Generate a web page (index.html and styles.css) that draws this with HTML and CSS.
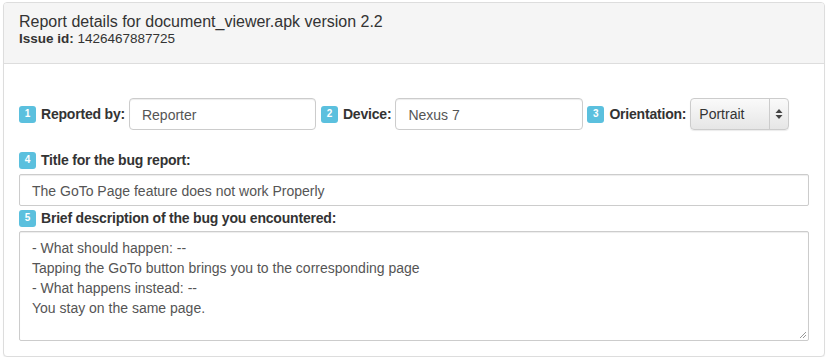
FILE: index.html
```html
<!DOCTYPE html>
<html lang="en">
<head>
    <meta charset="UTF-8" />
    <meta name="viewport" content="width=device-width, initial-scale=1.0" />
    <title>Report details</title>
    <link rel="stylesheet" href="styles.css">
</head>
<body>
    <div class="panel">
        <div class="panel-heading">
            <h3 class="panel-title">Report details for document_viewer.apk version 2.2</h3>
            <div class="issue"><b>Issue id:</b> 1426467887725</div>
        </div>

        <div class="panel-body">
            <div class="inline-row">
                <span class="badge">1</span>
                <label class="label">Reported by:</label>
                <div class="field field-reporter">Reporter</div>

                <span class="badge">2</span>
                <label class="label">Device:</label>
                <div class="field field-device">Nexus 7</div>

                <span class="badge">3</span>
                <label class="label">Orientation:</label>
                <div class="select">
                    <span class="select-value">Portrait</span>
                    <span class="select-arrows">
                        <svg width="8" height="12" viewBox="0 0 8 12">
                            <path d="M4 1 L7.5 5 L0.5 5 Z" fill="#444"/>
                            <path d="M4 11 L7.5 7 L0.5 7 Z" fill="#444"/>
                        </svg>
                    </span>
                </div>
            </div>

            <div class="label-row first">
                <span class="badge">4</span>
                <label class="label">Title for the bug report:</label>
            </div>
            <div class="field field-wide">The GoTo Page feature does not work Properly</div>

            <div class="label-row">
                <span class="badge">5</span>
                <label class="label">Brief description of the bug you encountered:</label>
            </div>
            <div class="textarea">
                - What should happen: --<br>
                Tapping the GoTo button brings you to the corresponding page<br>
                - What happens instead: --<br>
                You stay on the same page.
                <svg class="grip" width="8" height="8" viewBox="0 0 8 8">
                    <path d="M7 1 L1 7 M7 4 L4 7" stroke="#999" stroke-width="1"/>
                </svg>
            </div>
        </div>
    </div>
</body>
</html>
```

FILE: styles.css
```css
* {
    margin: 0;
    padding: 0;
    box-sizing: border-box;
}

body {
    font-family: "Liberation Sans", Arial, sans-serif;
    font-size: 14px;
    line-height: 20px;
    color: #333;
    background-color: #fff;
    padding: 2px 5px 0 3px;
}

.panel {
    width: 822px;
    border: 1px solid #ddd;
    border-radius: 4px;
    box-shadow: 0 1px 1px rgba(0,0,0,0.05);
    background-color: #fff;
}

.panel-heading {
    background-color: #f5f5f5;
    border-bottom: 1px solid #ddd;
    border-radius: 3px 3px 0 0;
    padding: 9px 15px 0;
    height: 61px;
}

.panel-title {
    font-size: 16px;
    font-weight: normal;
    line-height: 19px;
    color: #333;
}

.issue {
    font-size: 13.5px;
    line-height: 16px;
}

.panel-body {
    padding: 34px 15px 15px;
}

.inline-row {
    display: flex;
    align-items: center;
}

.badge {
    display: inline-flex;
    align-items: center;
    justify-content: center;
    width: 17px;
    height: 17px;
    border-radius: 3px;
    background-color: #5bc0de;
    color: #fff;
    font-size: 10px;
    font-weight: bold;
    margin-right: 5px;
    flex-shrink: 0;
}

.label {
    font-weight: bold;
    font-size: 14px;
    letter-spacing: -0.2px;
    margin-right: 4px;
    white-space: nowrap;
}

.field {
    height: 32px;
    padding: 6px 12px;
    border: 1px solid #ccc;
    border-radius: 4px;
    box-shadow: inset 0 1px 1px rgba(0,0,0,0.075);
    color: #555;
    font-size: 14px;
    line-height: 20px;
}

.field-reporter {
    width: 187px;
    margin-right: 5px;
}

.field-device {
    width: 188px;
    margin-right: 4px;
}

.field-wide {
    width: 100%;
    border-radius: 2px;
}

.select {
    display: flex;
    width: 99px;
    height: 32px;
    border: 1px solid #ccc;
    border-radius: 4px;
    background: linear-gradient(#fafafa, #e6e6e6);
    box-shadow: 0 1px 1px rgba(0,0,0,0.08);
    color: #333;
}

.select-value {
    flex: 1;
    padding: 5px 8px;
}

.select-arrows {
    width: 19px;
    border-left: 1px solid #ccc;
    display: flex;
    align-items: center;
    justify-content: center;
}

.label-row {
    display: flex;
    align-items: center;
    height: 20px;
    margin-bottom: 4px;
}

.label-row.first {
    margin-top: 20px;
}

.label-row + .textarea {
    margin-top: -1px;
}

.field-wide + .label-row {
    margin-top: 2px;
}

.textarea {
    position: relative;
    height: 110px;
    padding: 6px 12px;
    border: 1px solid #ccc;
    border-radius: 2px;
    box-shadow: inset 0 1px 1px rgba(0,0,0,0.075);
    color: #555;
}

.grip {
    position: absolute;
    right: 1px;
    bottom: 1px;
}
```
